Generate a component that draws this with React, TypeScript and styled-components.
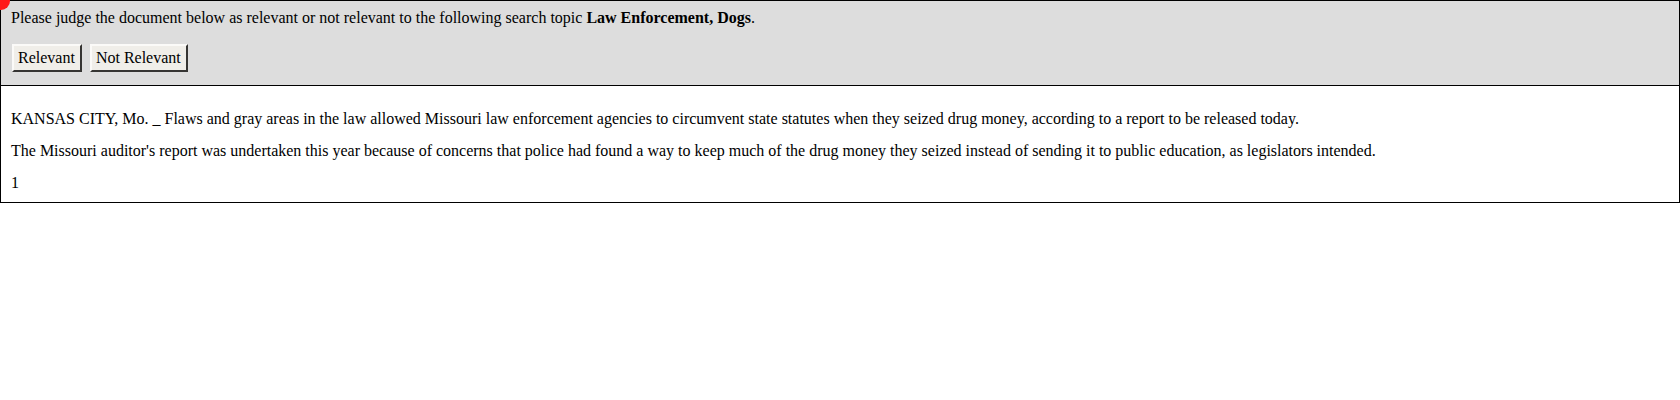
import * as React from 'react';
import styled, { createGlobalStyle } from 'styled-components';

const GlobalStyle = createGlobalStyle`
    body {
        margin: 0;
        font-family: "Liberation Serif", "Times New Roman", serif;
        font-size: 16px;
        color: #000;
        background: #fff;
    }
`;

const App = () => (
    <>
        <GlobalStyle />
        <Frame>
            <Marker />
            <Header>
                <Prompt>
                    Please judge the document below as relevant or not relevant
                    to the following search topic{' '}
                    <b>Law Enforcement, Dogs</b>.
                </Prompt>
                <ButtonRow>
                    <JudgeButton>Relevant</JudgeButton>
                    <JudgeButton>Not Relevant</JudgeButton>
                </ButtonRow>
            </Header>
            <Document>
                <Para>
                    KANSAS CITY, Mo. _ Flaws and gray areas in the law allowed
                    Missouri law enforcement agencies to circumvent state
                    statutes when they seized drug money, according to a report
                    to be released today.
                </Para>
                <Para>
                    The Missouri auditor's report was undertaken this year
                    because of concerns that police had found a way to keep much
                    of the drug money they seized instead of sending it to
                    public education, as legislators intended.
                </Para>
                <PageNum>1</PageNum>
            </Document>
        </Frame>
    </>
);

const Frame = styled.div`
    position: relative;
    border: 1px solid #000;
    box-sizing: border-box;
    width: 100%;
`;

const Marker = styled.span`
    position: absolute;
    top: -9px;
    left: -9px;
    width: 18px;
    height: 18px;
    border-radius: 50%;
    background: #ff1a1a;
`;

const Header = styled.div`
    background: #dddddd;
    border-bottom: 1px solid #000;
    padding: 8px 10px 13px;
`;

const Prompt = styled.div`
    line-height: 18px;
`;

const ButtonRow = styled.div`
    display: flex;
    gap: 8px;
    margin-top: 17px;
    padding-left: 1px;
`;

const JudgeButton = styled.button`
    font-family: "Liberation Serif", "Times New Roman", serif;
    font-size: 16px;
    height: 28px;
    padding: 0 5px 0 4px;
    background: #f0eee9;
    color: #000;
    border: 2px outset #c8c6c1;
    border-top-color: #fbfaf8;
    border-left-color: #fbfaf8;
    border-right-color: #8a8884;
    border-bottom-color: #8a8884;
`;

const Document = styled.div`
    padding: 9px 10px 11px;
`;

const Para = styled.p`
    margin: 16px 0;
    line-height: 16px;
`;

const PageNum = styled.div`
    line-height: 16px;
`;

export default App;
